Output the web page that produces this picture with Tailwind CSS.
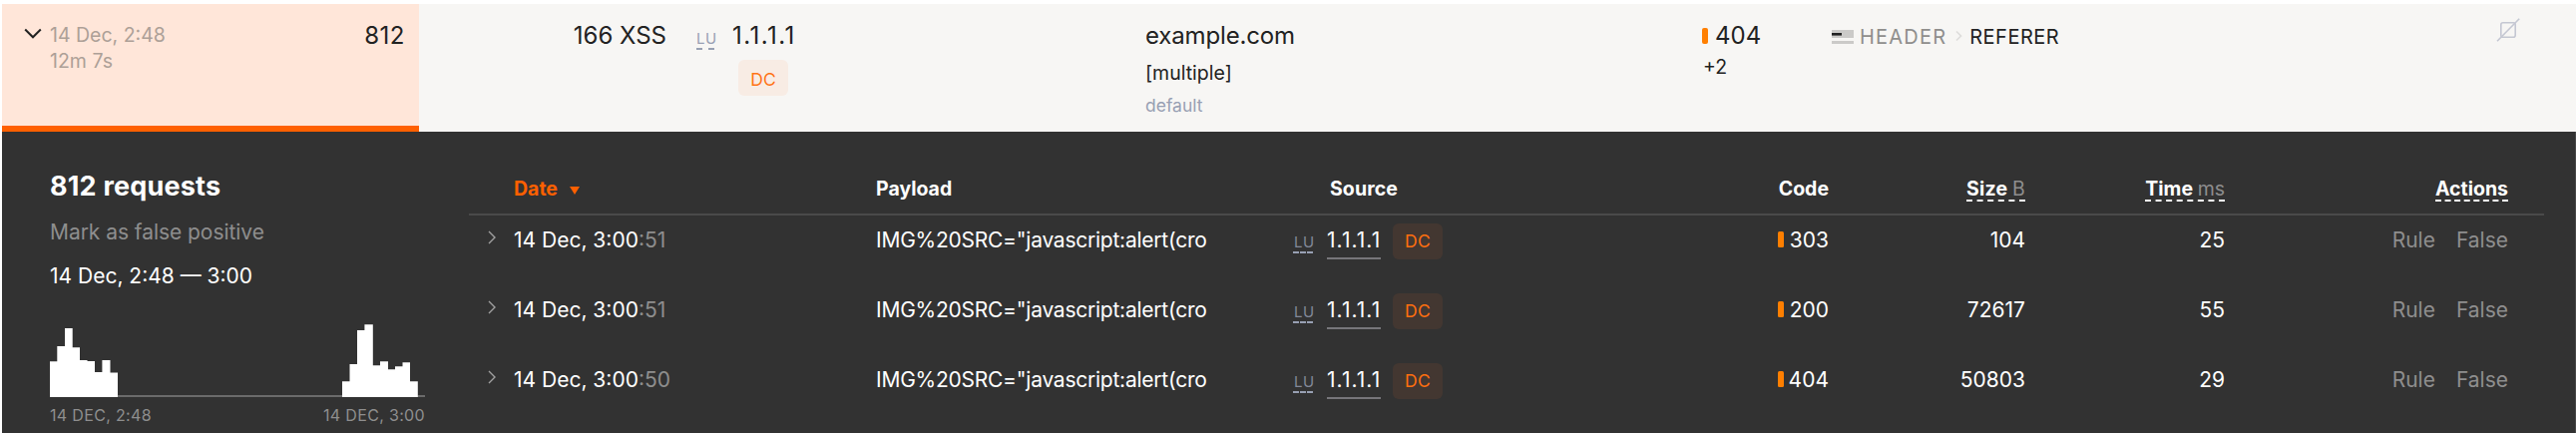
<!DOCTYPE html>
<html lang="en">
<head>
<meta charset="utf-8">
<title>Attack requests</title>
<script src="https://cdn.jsdelivr.net/npm/@tailwindcss/browser@4"></script>
</head>
<body class="w-[2582px] h-[434px] overflow-hidden bg-white pt-1 font-['Inter',sans-serif] text-[#222] whitespace-nowrap">

<!-- Summary row -->
<section class="ml-0.5 h-32 flex bg-[#f7f6f4] text-[24px] leading-[30px]">
  <div class="w-[418px] h-32 flex justify-between bg-[#ffe6d9] border-b-6 border-[#ff6000] pr-[14px]">
    <div class="flex pl-[22px] pt-[18px]">
      <svg class="w-[18px] h-3 mt-[6px] mr-2" viewBox="0 0 18 12" fill="none" stroke="#222" stroke-width="2"><path d="M1.2 1.5 9 9.3l7.8-7.8"/></svg>
      <div class="text-[19.5px] leading-[26px] text-[#ada097]">
        <div>14 Dec, 2:48</div>
        <div>12m 7s</div>
      </div>
    </div>
    <div class="pt-[17px] tracking-[0.5px]">812</div>
  </div>
  <div class="w-[248px] pt-[17px] text-right">166 XSS</div>
  <div class="w-[480px] pl-[30px] pt-[17px]">
    <div class="flex items-start">
      <span class="w-[18px] h-[22px] mt-[7px] border-b-2 border-dashed border-[#98a0b3] text-[15px] leading-[21px] tracking-[0.5px] text-[#98a0b3]">LU</span>
      <span class="ml-[18px] tracking-[1.45px]">1.1.1.1</span>
    </div>
    <div class="ml-[42px] mt-[9px] w-[50px] h-9 rounded-md bg-[#f8ece4] text-center text-[17.5px] leading-[39px] text-[#ff7417]">DC</div>
  </div>
  <div class="w-[558px] pt-[17px]">
    <div class="tracking-[-0.15px]">example.com</div>
    <div class="mt-2 text-[19.5px] leading-[28px]">[multiple]</div>
    <div class="mt-1 text-[17.5px] leading-[29px] text-[#98a0b3]">default</div>
  </div>
  <div class="w-[130px] pt-[17px]">
    <div class="flex items-center"><span class="w-1.5 h-4 mr-[7px] rounded-[2px] bg-[#ff7f00]"></span>404</div>
    <div class="pl-px text-[19.5px] leading-[32px]">+2</div>
  </div>
  <div class="flex pt-[17px] text-[20px] leading-[32px]">
    <svg class="w-[22px] h-[14px] mt-[9px] mr-[6px]" viewBox="0 0 22 14"><path fill="#cbcac8" d="M0 0h22v8H0zM0 11h22v3H0z"/><path fill="#222" d="M0 3h10v2.6H0z"/></svg>
    <span class="tracking-[1.2px] text-[#8f8e8c]">HEADER</span>
    <svg class="w-[7px] h-3 mt-[9px] ml-[9px] mr-[7px]" viewBox="0 0 7 12" fill="none" stroke="#dedddb" stroke-width="1.7"><path d="m1 1.5 4.5 4.5L1 10.5"/></svg>
    <span class="tracking-[0.5px]">REFERER</span>
  </div>
  <svg class="w-6 h-6 mt-[14px] ml-auto mr-[56px]" viewBox="0 0 24 24" fill="none" stroke="#c4c7d2" stroke-width="1.6"><rect x="4.8" y="4.8" width="14.4" height="14.4" rx="2"/><path d="M1 23.2 23.2.8"/></svg>
</section>

<!-- Details panel -->
<section class="ml-0.5 h-[302px] flex bg-[#323232] border-r border-[#484848] text-white">
  <aside class="w-[376px] ml-12 pt-[39px]">
    <h2 class="text-[27px] leading-[32px] font-bold tracking-[0.2px]">812 requests</h2>
    <p class="mt-4 text-[21px] leading-[28px] tracking-[-0.05px] text-[#8e8e8e]">Mark as false positive</p>
    <p class="mt-4 text-[21px] leading-[28px]">14 Dec, 2:48 — 3:00</p>
    <svg class="mt-[29px] w-[376px] h-[78px]" viewBox="0 0 376 78">
      <path fill="#6b6b6b" d="M0 76h376v2H0z"/>
      <path fill="#fff" d="M0 78V42.3h7.3V27h7.7V9h7.7v19.3H30V41h7.5v1H45v11h7.4V41h8.100v12.600H68V78zM293 78V62.300h7.500V45h7.500V11h7.400V5.300h8.400v41h7.200v-4h8v8h7v-3h7.500v-4h7.500v19h7.800V78z"/>
    </svg>
    <div class="mt-2 flex justify-between text-[16px] leading-[20px] tracking-[0.34px] text-[#8e8e8e]"><span>14 DEC, 2:48</span><span>14 DEC, 3:00</span></div>
  </aside>

  <div class="ml-11 w-[2080px]">
    <div class="h-[84px] pt-[44px] flex border-b-2 border-[#4a4a4a] text-[19.5px] leading-[26px] font-bold">
      <div class="w-[408px] pl-[45px] flex text-[#ff6000]">Date<svg class="w-[10px] h-2 mt-[11px] ml-3" viewBox="0 0 10 8"><path fill="#ff6000" d="M0 0h10L5 8z"/></svg></div>
      <div class="w-[418px]">Payload</div>
      <div class="w-[344px] pl-[37px] tracking-[0.1px]">Source</div>
      <div class="w-[193px] text-right">Code</div>
      <div class="w-[197px] flex justify-end"><div class="h-[26px] border-b-2 border-dashed border-white tracking-[0.2px]">Size <span class="font-normal text-[#8e8e8e]">B</span></div></div>
      <div class="w-[200px] flex justify-end"><div class="h-[26px] border-b-2 border-dashed border-white">Time <span class="font-normal text-[#8e8e8e]">ms</span></div></div>
      <div class="w-[284px] flex justify-end"><div class="h-[26px] border-b-2 border-dashed border-white">Actions</div></div>
    </div>
    <div id="rows"></div>
  </div>
</section>
<script>
const rows = [
  [":51", "303", "104", "25"],
  [":51", "200", "72617", "55"],
  [":50", "404", "50803", "29"],
];
document.getElementById("rows").innerHTML = rows.map(([sec, code, size, time]) => `
  <div class="h-[70px] pt-2 flex items-start text-[21px] leading-[33px]">
    <svg class="w-2 h-[14px] mt-[7px] ml-[19px] mr-[18px]" viewBox="0 0 8 14" fill="none" stroke="#a0a0a0" stroke-width="1.4"><path d="m1 1 6 6-6 6"/></svg>
    <div class="w-[363px]">14 Dec, 3:00<span class="text-[#8e8e8e]">${sec}</span></div>
    <div class="w-[418px] tracking-[-0.24px]">IMG%20SRC="javascript:alert(cro</div>
    <div class="w-[344px] flex items-start">
      <span class="w-5 h-5 mt-[10px] pl-px border-b-2 border-dashed border-[#98a0b3] text-[15px] leading-[17px] tracking-[0.6px] text-[#828898]">LU</span>
      <span class="ml-[14px] w-[54px] h-9 border-b-2 border-[#77767a] tracking-[1.05px]">1.1.1.1</span>
      <span class="ml-3 w-[50px] h-9 rounded-md bg-[#433731] text-center text-[17.5px] leading-[35px] tracking-[0.3px] text-[#ff6f0f]">DC</span>
    </div>
    <div class="w-[193px] flex justify-end"><span class="w-1.5 h-4 mt-2 mr-auto ml-[142px] rounded-[1.5px] bg-[#ff7f00]"></span>${code}</div>
    <div class="w-[197px] text-right">${size}</div>
    <div class="w-[200px] text-right">${time}</div>
    <div class="w-[284px] flex justify-end gap-[21px] text-[#8e8e8e]"><span>Rule</span><span>False</span></div>
  </div>`).join("");
</script>
</body>
</html>
